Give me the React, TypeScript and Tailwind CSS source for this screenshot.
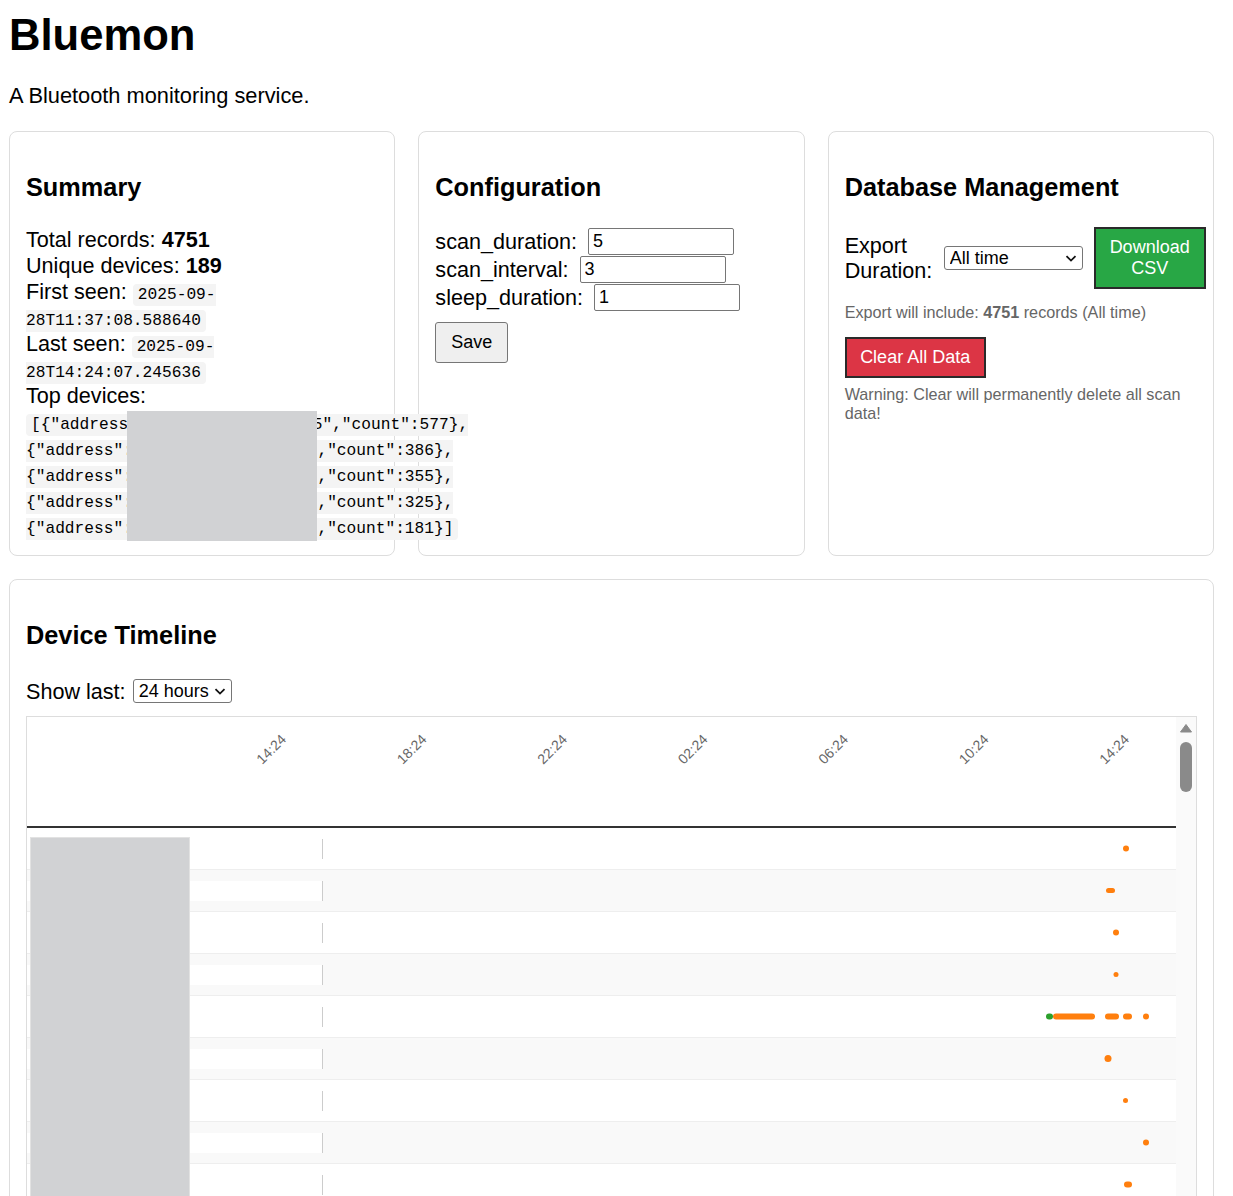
import React from "react";

type Mark = { x: number; w: number; h: number; green?: boolean };

// page x of the left edge of the timeline track
const TRACK_LEFT = 323;
const TRACK_WIDTH = 1176 - TRACK_LEFT;

const rows: Mark[][] = [
  [{ x: 1123, w: 6, h: 6 }],
  [{ x: 1106, w: 9, h: 5 }],
  [{ x: 1113, w: 6, h: 6 }],
  [{ x: 1113.5, w: 5, h: 5 }],
  [
    { x: 1046, w: 7, h: 6, green: true },
    { x: 1053, w: 42, h: 6 },
    { x: 1105, w: 14, h: 6 },
    { x: 1123, w: 9, h: 6 },
    { x: 1143, w: 6, h: 6 },
  ],
  [{ x: 1104.5, w: 7, h: 7 }],
  [{ x: 1123, w: 5, h: 5 }],
  [{ x: 1143, w: 6, h: 6 }],
  [{ x: 1124, w: 8, h: 6 }],
  [{ x: 1118, w: 6, h: 6 }],
  [{ x: 1131, w: 6, h: 6 }],
  [{ x: 1109, w: 6, h: 6 }],
  [{ x: 1140, w: 6, h: 6 }],
];

const ticks = ["14:24", "18:24", "22:24", "02:24", "06:24", "10:24", "14:24"];

const topDevices = [
  '[{"address":"XX:XX:XX:XX:XX:X5","count":577},',
  '{"address":"XX:XX:XX:XX:XX:XX","count":386},',
  '{"address":"XX:XX:XX:XX:XX:XX","count":355},',
  '{"address":"XX:XX:XX:XX:XX:XX","count":325},',
  '{"address":"XX:XX:XX:XX:XX:XX","count":181}]',
];

function Code({ children }: { children: React.ReactNode }) {
  return (
    <code className="whitespace-nowrap rounded-[4px] bg-[#f4f4f4] px-[5px] py-[2px] font-['Liberation_Mono',monospace] text-[16.2px] leading-[16px]">
      {children}
    </code>
  );
}

function Chevron() {
  return (
    <svg width="12" height="7" viewBox="0 0 12 7">
      <path d="M1.5 1.2L6 5.6l4.5-4.4" fill="none" stroke="#111" strokeWidth="1.8" />
    </svg>
  );
}

function Select({ value, options, width }: { value: string; options: string[]; width: string }) {
  return (
    <div className={`relative shrink-0 ${width}`}>
      <select
        defaultValue={value}
        className="block h-[24px] w-full appearance-none rounded-[3px] border border-[#767676] bg-white pl-[5px] text-[18px] leading-[20px] text-black"
      >
        {options.map((o) => (
          <option key={o}>{o}</option>
        ))}
      </select>
      <span className="pointer-events-none absolute right-[6px] top-[9px] flex">
        <Chevron />
      </span>
    </div>
  );
}

function Card({ title, className, children }: { title: string; className?: string; children: React.ReactNode }) {
  return (
    <div className={`rounded-[8px] border border-[#ddd] bg-white p-[16px] ${className ?? ""}`}>
      <h3 className="mb-[25px] mt-[25px] text-[25.3px] font-bold leading-[29px]">{title}</h3>
      {children}
    </div>
  );
}

function Summary() {
  return (
    <Card title="Summary" className="relative">
      <div className="text-[21.6px] leading-[26px]">
        <div>
          Total records: <b>4751</b>
        </div>
        <div>
          Unique devices: <b>189</b>
        </div>
        <div>
          First seen:{" "}
          <Code>
            2025-09-
            <br />
            28T11:37:08.588640
          </Code>
        </div>
        <div>
          Last seen:{" "}
          <Code>
            2025-09-
            <br />
            28T14:24:07.245636
          </Code>
        </div>
        <div>
          Top devices:
          <br />
          <Code>
            {topDevices.map((line, i) => (
              <React.Fragment key={i}>
                {line}
                {i < topDevices.length - 1 && <br />}
              </React.Fragment>
            ))}
          </Code>
        </div>
      </div>
      {/* redacted addresses */}
      <div className="absolute left-[117px] top-[279px] h-[130px] w-[190px] bg-[#d1d2d4]" />
    </Card>
  );
}

function Configuration() {
  const fields = [
    ["scan_duration", "5"],
    ["scan_interval", "3"],
    ["sleep_duration", "1"],
  ];
  return (
    <Card title="Configuration">
      <div className="text-[21.6px] leading-[25px]">
        {fields.map(([name, value]) => (
          <div key={name} className="flex h-[28px] items-center">
            <span>{name}:</span>
            <input
              defaultValue={value}
              className="ml-[11px] h-[27px] w-[146px] rounded-[2px] border border-[#767676] bg-white px-[4px] text-[18px] leading-[20px]"
            />
          </div>
        ))}
        <button className="mt-[11px] h-[41px] w-[73px] rounded-[3px] border border-[#767676] bg-[#efefef] text-[18px] leading-[21px]">
          Save
        </button>
      </div>
    </Card>
  );
}

function DatabaseManagement() {
  return (
    <Card title="Database Management">
      <div className="flex items-center">
        <label className="w-[90px] shrink-0 text-[21.6px] leading-[25px]">Export Duration:</label>
        <div className="ml-[9px] flex">
          <Select value="All time" options={["All time", "Last 24 hours", "Last 7 days"]} width="w-[139px]" />
        </div>
        <button className="ml-[11px] h-[62px] w-[112px] shrink-0 border-2 border-[#2a2a2a] bg-[#28a745] text-[18px] leading-[21px] text-white">
          Download
          <br />
          CSV
        </button>
      </div>
      <p className="mt-[14px] text-[16.2px] leading-[19px] text-[#666]">
        Export will include: <b>4751</b> records (All time)
      </p>
      <button className="mt-[15px] h-[41px] w-[141px] border-2 border-[#2a2a2a] bg-[#dc3545] text-[18px] leading-[21px] text-white">
        Clear All Data
      </button>
      <p className="mt-[7px] text-[16.2px] leading-[18.5px] text-[#666]">
        Warning: Clear will permanently delete all scan data!
      </p>
    </Card>
  );
}

function TimelineRow({ marks, index }: { marks: Mark[]; index: number }) {
  return (
    <div className={`flex h-[42px] items-center border-b border-[#eee] ${index % 2 ? "bg-[#f9f9f9]" : "bg-white"}`}>
      <div className="h-[20px] w-[296px] shrink-0 border-r border-[#ccc] bg-white" />
      <svg width={TRACK_WIDTH} height="41" className="block shrink-0">
        {marks.map((m, i) => (
          <rect
            key={i}
            x={m.x - TRACK_LEFT}
            y={20.5 - m.h / 2}
            width={m.w}
            height={m.h}
            rx={m.h / 2}
            fill={m.green ? "#2ca02c" : "#ff7f0e"}
          />
        ))}
      </svg>
    </div>
  );
}

function DeviceTimeline() {
  return (
    <Card title="Device Timeline" className="mt-[23px]">
      <div className="flex h-[32px] items-center text-[21.6px] leading-[25px]">
        <span>Show last:</span>
        <div className="ml-[7px] flex">
          <Select value="24 hours" options={["1 hour", "6 hours", "24 hours", "7 days"]} width="w-[99px]" />
        </div>
      </div>
      <div className="mt-[9px] flex h-[600px] overflow-hidden border border-[#ddd]">
        <div className="relative min-w-0 flex-1">
          <div className="h-[111px] border-b-2 border-[#333]">
            <svg width="1149" height="109" className="block">
              {ticks.map((t, i) => {
                const cx = 272 + i * 140.5 - 27;
                return (
                  <text
                    key={i}
                    x={cx}
                    y={33}
                    fill="#666"
                    fontSize="14"
                    fontFamily="'Liberation Sans', Arial, sans-serif"
                    textAnchor="middle"
                    dominantBaseline="middle"
                    transform={`rotate(-45 ${cx} 33)`}
                  >
                    {t}
                  </text>
                );
              })}
            </svg>
          </div>
          {rows.map((marks, i) => (
            <TimelineRow key={i} marks={marks} index={i} />
          ))}
          {/* redacted device names */}
          <div className="absolute left-[3px] top-[120px] h-[700px] w-[160px] border border-[#e2e2e2] bg-[#d1d2d4]" />
        </div>
        <div className="flex w-[20px] shrink-0 flex-col items-center bg-[#fafafa]">
          <svg className="mt-[6px]" width="14" height="10" viewBox="0 0 14 10">
            <path d="M7 1.5L12.5 9H1.5Z" fill="#8a8a8a" stroke="#8a8a8a" strokeLinejoin="round" />
          </svg>
          <div className="mt-[9px] h-[50px] w-[12px] rounded-full bg-[#8a8a8a]" />
        </div>
      </div>
    </Card>
  );
}

export default function App() {
  return (
    <div className="h-[1196px] overflow-hidden bg-white pl-[9px] pt-[10px] font-['Liberation_Sans',Arial,sans-serif] text-black">
      <h1 className="text-[43.6px] font-bold leading-[50px]">Bluemon</h1>
      <p className="mt-[23px] text-[21.8px] leading-[25px]">A Bluetooth monitoring service.</p>
      <div className="mt-[23px] w-[1205px]">
        <div className="grid grid-cols-3 gap-[23px]">
          <Summary />
          <Configuration />
          <DatabaseManagement />
        </div>
        <DeviceTimeline />
      </div>
    </div>
  );
}
